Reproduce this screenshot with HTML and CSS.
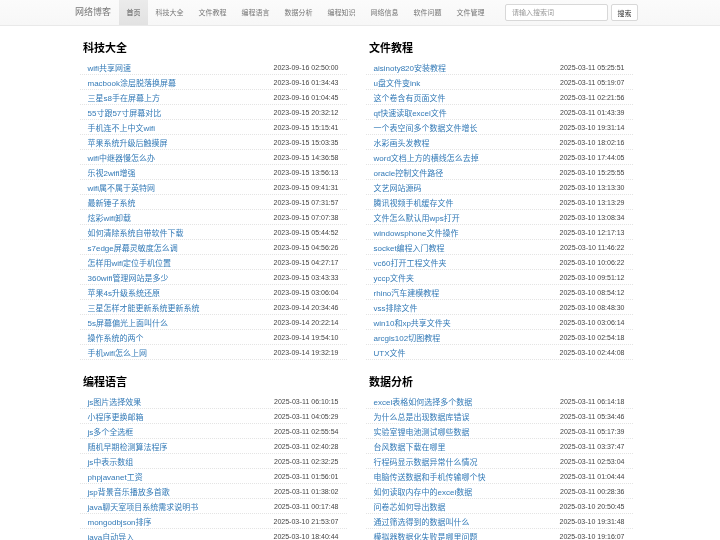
FILE: index.html
```html
<!DOCTYPE html>
<html lang="zh-CN">
<head>
<meta charset="utf-8">
<title>网络博客</title>
<link rel="stylesheet" href="styles.css">
</head>
<body>
<nav class="navbar">
  <a class="brand" href="#">网络博客</a>
  <ul class="nav">
    <li><a class="active" href="#">首页</a></li>
    <li><a href="#">科技大全</a></li>
    <li><a href="#">文件教程</a></li>
    <li><a href="#">编程语言</a></li>
    <li><a href="#">数据分析</a></li>
    <li><a href="#">编程知识</a></li>
    <li><a href="#">网络信息</a></li>
    <li><a href="#">软件问题</a></li>
    <li><a href="#">文件管理</a></li>
  </ul>
  <form class="search">
    <input class="search-input" type="text" placeholder="请输入搜索词">
    <button class="search-btn" type="button">搜索</button>
  </form>
</nav>
<main class="grid">
  <section class="block">
    <h2 class="title">科技大全</h2>
    <ul class="list">
      <li class="row"><a href="#">wifi共享网速</a><span class="date">2023-09-16 02:50:00</span></li>
      <li class="row"><a href="#">macbook涂层脱落换屏幕</a><span class="date">2023-09-16 01:34:43</span></li>
      <li class="row"><a href="#">三星s8手在屏幕上方</a><span class="date">2023-09-16 01:04:45</span></li>
      <li class="row"><a href="#">55寸跟57寸屏幕对比</a><span class="date">2023-09-15 20:32:12</span></li>
      <li class="row"><a href="#">手机连不上中文wifi</a><span class="date">2023-09-15 15:15:41</span></li>
      <li class="row"><a href="#">苹果系统升级后触摸屏</a><span class="date">2023-09-15 15:03:35</span></li>
      <li class="row"><a href="#">wifi中继器慢怎么办</a><span class="date">2023-09-15 14:36:58</span></li>
      <li class="row"><a href="#">乐视2wifi增强</a><span class="date">2023-09-15 13:56:13</span></li>
      <li class="row"><a href="#">wifi属不属于英特网</a><span class="date">2023-09-15 09:41:31</span></li>
      <li class="row"><a href="#">最新锤子系统</a><span class="date">2023-09-15 07:31:57</span></li>
      <li class="row"><a href="#">炫彩wifi卸载</a><span class="date">2023-09-15 07:07:38</span></li>
      <li class="row"><a href="#">如何清除系统自带软件下载</a><span class="date">2023-09-15 05:44:52</span></li>
      <li class="row"><a href="#">s7edge屏幕灵敏度怎么调</a><span class="date">2023-09-15 04:56:26</span></li>
      <li class="row"><a href="#">怎样用wifi定位手机位置</a><span class="date">2023-09-15 04:27:17</span></li>
      <li class="row"><a href="#">360wifi管理网站是多少</a><span class="date">2023-09-15 03:43:33</span></li>
      <li class="row"><a href="#">苹果4s升级系统还原</a><span class="date">2023-09-15 03:06:04</span></li>
      <li class="row"><a href="#">三星怎样才能更新系统更新系统</a><span class="date">2023-09-14 20:34:46</span></li>
      <li class="row"><a href="#">5s屏幕偏光上面叫什么</a><span class="date">2023-09-14 20:22:14</span></li>
      <li class="row"><a href="#">操作系统的两个</a><span class="date">2023-09-14 19:54:10</span></li>
      <li class="row"><a href="#">手机wifi怎么上网</a><span class="date">2023-09-14 19:32:19</span></li>
    </ul>
  </section>
  <section class="block">
    <h2 class="title">文件教程</h2>
    <ul class="list">
      <li class="row"><a href="#">aisinoty820安装教程</a><span class="date">2025-03-11 05:25:51</span></li>
      <li class="row"><a href="#">u盘文件变ink</a><span class="date">2025-03-11 05:19:07</span></li>
      <li class="row"><a href="#">这个卷含有页面文件</a><span class="date">2025-03-11 02:21:56</span></li>
      <li class="row"><a href="#">qt快速读取excel文件</a><span class="date">2025-03-11 01:43:39</span></li>
      <li class="row"><a href="#">一个表空间多个数据文件增长</a><span class="date">2025-03-10 19:31:14</span></li>
      <li class="row"><a href="#">水彩画头发教程</a><span class="date">2025-03-10 18:02:16</span></li>
      <li class="row"><a href="#">word文档上方的横线怎么去掉</a><span class="date">2025-03-10 17:44:05</span></li>
      <li class="row"><a href="#">oracle控制文件路径</a><span class="date">2025-03-10 15:25:55</span></li>
      <li class="row"><a href="#">文艺网站源码</a><span class="date">2025-03-10 13:13:30</span></li>
      <li class="row"><a href="#">腾讯视频手机缓存文件</a><span class="date">2025-03-10 13:13:29</span></li>
      <li class="row"><a href="#">文件怎么默认用wps打开</a><span class="date">2025-03-10 13:08:34</span></li>
      <li class="row"><a href="#">windowsphone文件操作</a><span class="date">2025-03-10 12:17:13</span></li>
      <li class="row"><a href="#">socket编程入门教程</a><span class="date">2025-03-10 11:46:22</span></li>
      <li class="row"><a href="#">vc60打开工程文件夹</a><span class="date">2025-03-10 10:06:22</span></li>
      <li class="row"><a href="#">yccp文件夹</a><span class="date">2025-03-10 09:51:12</span></li>
      <li class="row"><a href="#">rhino汽车建模教程</a><span class="date">2025-03-10 08:54:12</span></li>
      <li class="row"><a href="#">vss排除文件</a><span class="date">2025-03-10 08:48:30</span></li>
      <li class="row"><a href="#">win10和xp共享文件夹</a><span class="date">2025-03-10 03:06:14</span></li>
      <li class="row"><a href="#">arcgis102切图教程</a><span class="date">2025-03-10 02:54:18</span></li>
      <li class="row"><a href="#">UTX文件</a><span class="date">2025-03-10 02:44:08</span></li>
    </ul>
  </section>
  <section class="block">
    <h2 class="title">编程语言</h2>
    <ul class="list">
      <li class="row"><a href="#">js图片选择效果</a><span class="date">2025-03-11 06:10:15</span></li>
      <li class="row"><a href="#">小程序更换邮箱</a><span class="date">2025-03-11 04:05:29</span></li>
      <li class="row"><a href="#">js多个全选框</a><span class="date">2025-03-11 02:55:54</span></li>
      <li class="row"><a href="#">随机早期检测算法程序</a><span class="date">2025-03-11 02:40:28</span></li>
      <li class="row"><a href="#">js中表示数组</a><span class="date">2025-03-11 02:32:25</span></li>
      <li class="row"><a href="#">phpjavanet工资</a><span class="date">2025-03-11 01:56:01</span></li>
      <li class="row"><a href="#">jsp背景音乐播放多首歌</a><span class="date">2025-03-11 01:38:02</span></li>
      <li class="row"><a href="#">java聊天室项目系统需求说明书</a><span class="date">2025-03-11 00:17:48</span></li>
      <li class="row"><a href="#">mongodbjson排序</a><span class="date">2025-03-10 21:53:07</span></li>
      <li class="row"><a href="#">java自动导入</a><span class="date">2025-03-10 18:40:44</span></li>
    </ul>
  </section>
  <section class="block">
    <h2 class="title">数据分析</h2>
    <ul class="list">
      <li class="row"><a href="#">excel表格如何选择多个数据</a><span class="date">2025-03-11 06:14:18</span></li>
      <li class="row"><a href="#">为什么总是出现数据库错误</a><span class="date">2025-03-11 05:34:46</span></li>
      <li class="row"><a href="#">实验室锂电池测试哪些数据</a><span class="date">2025-03-11 05:17:39</span></li>
      <li class="row"><a href="#">台风数据下载在哪里</a><span class="date">2025-03-11 03:37:47</span></li>
      <li class="row"><a href="#">行程码显示数据异常什么情况</a><span class="date">2025-03-11 02:53:04</span></li>
      <li class="row"><a href="#">电脑传送数据和手机传输哪个快</a><span class="date">2025-03-11 01:04:44</span></li>
      <li class="row"><a href="#">如何读取内存中的excel数据</a><span class="date">2025-03-11 00:28:36</span></li>
      <li class="row"><a href="#">问卷芯如何导出数据</a><span class="date">2025-03-10 20:50:45</span></li>
      <li class="row"><a href="#">通过筛选得到的数据叫什么</a><span class="date">2025-03-10 19:31:48</span></li>
      <li class="row"><a href="#">模拟器数据化失败是哪里问题</a><span class="date">2025-03-10 19:16:07</span></li>
    </ul>
  </section>
</main>
</body>
</html>
```
FILE: styles.css
```css
* { box-sizing: border-box; }
html, body { margin: 0; padding: 0; background: #fff; }
body {
  font-family: "Liberation Sans", "Noto Sans CJK SC", sans-serif;
  font-size: 8px;
  color: #333;
  overflow-x: hidden;
}
a { text-decoration: none; }
ul { list-style: none; margin: 0; padding: 0; }

.navbar {
  display: flex;
  align-items: stretch;
  height: 26px;
  padding-left: 75px;
  background: linear-gradient(to bottom, #fbfbfb, #f7f7f7);
  border-bottom: 1px solid #e9e9e9;
  filter: blur(0.3px);
}
.brand {
  width: 44px;
  font-size: 9px;
  line-height: 25px;
  color: #777;
}
.nav { display: flex; }
.nav a {
  display: block;
  padding: 0 7.5px;
  font-size: 7px;
  line-height: 25px;
  color: #777;
}
.nav a.active {
  background: linear-gradient(to bottom, #ebebeb, #e2e2e2);
  color: #555;
}
.search {
  display: flex;
  align-items: flex-start;
  gap: 3px;
  margin-left: 13px;
  padding-top: 4px;
}
.search-input {
  width: 103px;
  height: 17px;
  padding: 0 6px;
  font: 7px "Liberation Sans", "Noto Sans CJK SC", sans-serif;
  color: #555;
  background: #fff;
  border: 1px solid #d8d8d8;
  border-radius: 2px;
}
.search-input::placeholder { color: #999; }
.search-btn {
  width: 27px;
  height: 17px;
  padding: 0;
  font: 7px "Liberation Sans", "Noto Sans CJK SC", sans-serif;
  color: #333;
  background: #fff;
  border: 1px solid #d8d8d8;
  border-radius: 2px;
}

.grid {
  display: grid;
  grid-template-columns: 267px 267px;
  column-gap: 19px;
  row-gap: 0;
  padding: 15px 0 0 80px;
  filter: blur(0.3px);
}
.block { padding-bottom: 15px; }
.title {
  margin: 0 0 4px 3px;
  font-size: 11px;
  line-height: 15px;
  font-weight: 700;
  color: #000;
}
.row {
  display: flex;
  justify-content: space-between;
  align-items: center;
  height: 15px;
  padding: 0 8.5px 0 7.5px;
  border-bottom: 1px dotted #e4e4e4;
}
.row a { font-size: 8px; color: #337ab7; }
.date { font-size: 7px; color: #444; }
```
